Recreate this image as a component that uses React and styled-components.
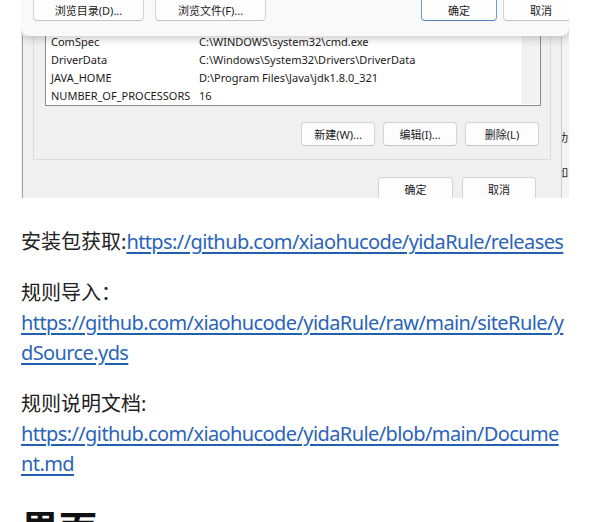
import React from "react";
import styled, { createGlobalStyle } from "styled-components";

const GlobalStyle = createGlobalStyle`
  body {
    margin: 0;
    background: #fff;
  }
`;

const Page = styled.div`
  width: 548px;
  padding: 0 21px;
  font-family: "Noto Sans", "Noto Sans CJK SC", sans-serif;
  color: #222;
`;

/* ---- the embedded Windows dialog screenshot ---- */

const Shot = styled.div`
  height: 198px;
  background: #f0f0f0;
  overflow: hidden;
  display: flex;
  flex-direction: column;
  font-family: "Noto Sans", "Noto Sans CJK SC", sans-serif;
  font-size: 11px;
  color: #1b1b1b;
`;

const TopBar = styled.div`
  position: relative;
  z-index: 2;
  flex-shrink: 0;
  height: 36px;
  background: #f9f9f9;
  border-radius: 0 0 8px 8px;
  box-shadow: 0 3px 9px rgba(0, 0, 0, 0.2);
  display: flex;
  justify-content: space-between;
  align-items: flex-start;
  padding-left: 12px;
`;

const BtnGroup = styled.div`
  display: flex;
  gap: ${({ gap }) => gap}px;
  margin-right: ${({ overflow }) => (overflow ? -10 : 0)}px;
`;

const WinButton = styled.div`
  flex-shrink: 0;
  width: ${({ w }) => w}px;
  height: ${({ top }) => (top ? 28 : 24)}px;
  margin-top: ${({ top }) => (top ? -7 : 0)}px;
  box-sizing: border-box;
  background: #fdfdfd;
  border: 1px solid ${({ primary }) => (primary ? "#6f9bcc" : "#d3d3d3")};
  border-bottom-color: ${({ primary }) => (primary ? "#4d82bf" : "#c2c2c2")};
  border-radius: 4px;
  display: flex;
  align-items: center;
  justify-content: center;
  padding-top: ${({ top }) => (top ? 6 : 0)}px;
  font-size: 11px;
  color: #1b1b1b;
`;

const Body = styled.div`
  flex: 1;
  display: flex;
`;

const Frame = styled.div`
  flex: 1;
  margin-left: 1px;
  border-left: 1px solid #a3a3a3;
  border-right: 1px solid #cdcdcd;
  padding: 0 25px 0 10px;
  display: flex;
  flex-direction: column;
`;

const GroupBox = styled.div`
  margin-top: -6px;
  margin-right: -15px;
  border: 1px solid #dcdcdc;
  border-top: none;
  padding: 0 9px 13px 11px;
  display: flex;
  flex-direction: column;
`;

const ListBox = styled.div`
  background: #fff;
  border: 1px solid #8c8c8c;
  padding: 1px 0;
  display: flex;
`;

const Rows = styled.div`
  flex: 1;
  display: flex;
  flex-direction: column;
`;

const Row = styled.div`
  height: 18px;
  display: flex;
  align-items: center;
  padding-left: 5px;
  white-space: nowrap;
  font-size: 11px;
`;

const Name = styled.span`
  width: 148px;
  flex-shrink: 0;
`;

const ScrollTrack = styled.div`
  width: 17px;
  background: #f2f2f2;
  border-left: 1px solid #ececec;
`;

const ButtonRow = styled.div`
  margin-top: 16px;
  padding-right: 2px;
  display: flex;
  justify-content: flex-end;
  gap: 8px;
`;

const FooterRow = styled.div`
  margin-top: 17px;
  display: flex;
  justify-content: flex-end;
  gap: 9px;
`;

const SideStrip = styled.div`
  width: 7px;
  overflow: hidden;
  background: #f3f3f3;
  padding-top: 94px;
  display: flex;
  flex-direction: column;
  gap: 20px;
`;

const Fragment = styled.span`
  display: block;
  line-height: 15px;
  font-size: 11px;
  margin-left: -5px;
  white-space: nowrap;
`;

/* ---- article text ---- */

const Para = styled.p`
  margin: ${({ first }) => (first ? 29 : 21)}px 0 0;
  font-size: 20px;
  line-height: 30px;
  word-break: break-all;
`;

const Link = styled.a`
  color: #2b64b8;
  letter-spacing: -0.6px;
  text-decoration: underline;
  text-decoration-thickness: 2px;
  text-underline-offset: 3px;
  text-decoration-color: #2160b0;
`;

const Heading = styled.h2`
  margin: 27px 0 0;
  font-size: 38px;
  line-height: 44px;
  font-weight: 700;
  color: #111;
`;

const envRows = [
  ["ComSpec", "C:\\WINDOWS\\system32\\cmd.exe"],
  ["DriverData", "C:\\Windows\\System32\\Drivers\\DriverData"],
  ["JAVA_HOME", "D:\\Program Files\\Java\\jdk1.8.0_321"],
  ["NUMBER_OF_PROCESSORS", "16"],
];

const App = () => {
  return (
    <Page>
      <GlobalStyle />
      <Shot>
        <TopBar>
          <BtnGroup gap={11}>
            <WinButton top w={111}>浏览目录(D)...</WinButton>
            <WinButton top w={111}>浏览文件(F)...</WinButton>
          </BtnGroup>
          <BtnGroup gap={6} overflow>
            <WinButton top primary w={76}>确定</WinButton>
            <WinButton top w={76}>取消</WinButton>
          </BtnGroup>
        </TopBar>
        <Body>
          <Frame>
            <GroupBox>
              <ListBox>
                <Rows>
                  {envRows.map(([name, value]) => (
                    <Row key={name}>
                      <Name>{name}</Name>
                      {value}
                    </Row>
                  ))}
                </Rows>
                <ScrollTrack />
              </ListBox>
              <ButtonRow>
                <WinButton w={74}>新建(W)...</WinButton>
                <WinButton w={74}>编辑(I)...</WinButton>
                <WinButton w={74}>删除(L)</WinButton>
              </ButtonRow>
            </GroupBox>
            <FooterRow>
              <WinButton w={75}>确定</WinButton>
              <WinButton w={74}>取消</WinButton>
            </FooterRow>
          </Frame>
          <SideStrip>
            <Fragment>功</Fragment>
            <Fragment>如</Fragment>
          </SideStrip>
        </Body>
      </Shot>

      <Para first>
        安装包获取:
        <Link href="#">https://github.com/xiaohucode/yidaRule/releases</Link>
      </Para>
      <Para>
        规则导入：
        <br />
        <Link href="#">
          https://github.com/xiaohucode/yidaRule/raw/main/siteRule/ydSource.yds
        </Link>
      </Para>
      <Para>
        规则说明文档:
        <br />
        <Link href="#">
          https://github.com/xiaohucode/yidaRule/blob/main/Document.md
        </Link>
      </Para>
      <Heading>界面</Heading>
    </Page>
  );
};

export default App;
